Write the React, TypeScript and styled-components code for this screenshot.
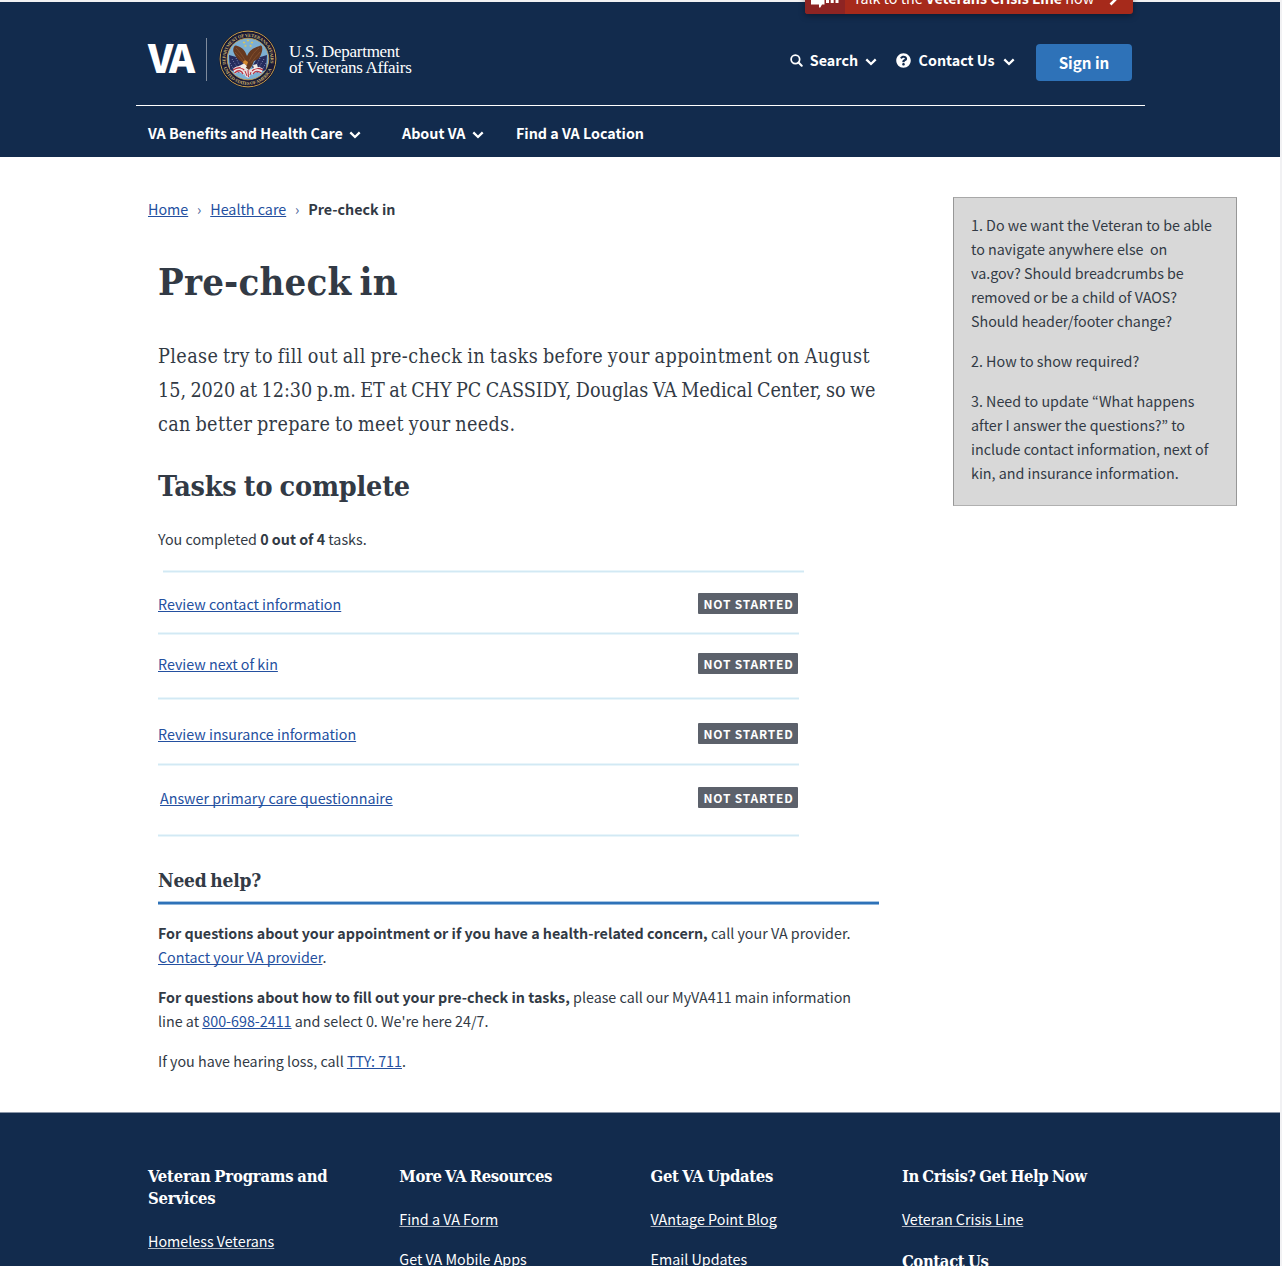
import React from "react";
import styled, { createGlobalStyle } from "styled-components";
import { FaQuestionCircle } from "react-icons/fa";

const sans = `"Noto Sans CJK KR", "Noto Sans", sans-serif`;
const slab = `"DejaVu Serif Condensed", "DejaVu Serif", serif`;
const navy = "#122b4d";
const ink = "#323a45";
const linkBlue = "#2450a0";

const GlobalStyle = createGlobalStyle`
  * { box-sizing: border-box; }
  body { margin: 0; background: #f2f2f3; }
  h1, h2, h3, p, ul { margin: 0; padding: 0; }
  ul { list-style: none; }
`;

const Frame = styled.div`
  width: 1282px;
  height: 1266px;
  overflow: hidden;
  padding: 2px 2px 0 0;
  background: #f1f1f3;
  font-family: ${sans};
  font-size: 14.31px;
  line-height: 24px;
  color: ${ink};
  position: relative;
`;

const Page = styled.div`
  background: #fff;
  height: 1264px;
  display: flex;
  flex-direction: column;
`;

/* ---------- header ---------- */

const Header = styled.header`
  height: 155px;
  flex: none;
  background: ${navy};
  color: #fff;
  padding-left: 136px;
`;

const HeaderTop = styled.div`
  width: 1009px;
  height: 104px;
  border-bottom: 1px solid #fff;
  padding: 0 13px 0 12px;
  display: flex;
  justify-content: space-between;
  align-items: flex-start;
`;

const Brand = styled.div`
  display: flex;
  padding-top: 28px;
`;

const Wordmark = styled.div`
  width: 58px;
  height: 60px;
  margin-top: -4px;
  font-weight: 900;
  font-size: 39.5px;
  line-height: 60px;
  letter-spacing: -3.5px;
`;

const BrandRule = styled.div`
  width: 1px;
  height: 43px;
  margin: 8px 12px 0 0;
  background: #7f8b9d;
`;

const BrandName = styled.div`
  margin: 14px 0 0 12px;
  font-family: "Liberation Serif", serif;
  font-size: 17px;
  line-height: 16px;
  letter-spacing: -0.28px;
  white-space: nowrap;
`;

const Tools = styled.div`
  display: flex;
  align-items: flex-start;
  padding-top: 42px;
`;

const Tool = styled.div<{ $after: number; $gap: number }>`
  display: flex;
  align-items: center;
  height: 34px;
  margin-top: -1px;
  gap: ${(p) => p.$gap}px;
  margin-right: ${(p) => p.$after}px;
  font-weight: 700;
  white-space: nowrap;
`;

const SignIn = styled.button`
  width: 96px;
  height: 37px;
  border: 0;
  border-radius: 4px;
  background: #2e72b8;
  color: #fff;
  font: 700 15.2px/37px ${sans};
  padding: 0;
`;

const Nav = styled.nav`
  display: flex;
  padding: 15px 0 0 12px;
  font-weight: 700;
`;

const NavItem = styled.div<{ $width: number }>`
  width: ${(p) => p.$width}px;
  display: flex;
  align-items: center;
  gap: 6.5px;
  white-space: nowrap;
`;

const CrisisBanner = styled.div`
  position: absolute;
  left: 804.5px;
  top: -26px;
  width: 328px;
  height: 40px;
  display: flex;
  border-radius: 0 0 3px 3px;
  overflow: hidden;
  background: #a62a1b;
  color: #fff;
  box-shadow: 0 2px 6px rgba(0, 0, 0, 0.35);
`;

const CrisisIcon = styled.div`
  width: 40px;
  background: #8d2423;
  padding: 14px 0 0 6px;
`;

const CrisisText = styled.div`
  flex: 1;
  display: flex;
  justify-content: space-between;
  padding: 12px 15px 0 8.5px;
  white-space: nowrap;
  line-height: 24px;
`;

const Drawing = styled.svg<{ $drop?: number }>`
  flex: none;
  margin-top: ${(p) => p.$drop ?? 0}px;
`;

/* ---------- body ---------- */

const Body = styled.div`
  height: 955px;
  flex: none;
  display: flex;
  align-items: flex-start;
  padding-left: 148px;
`;

const Main = styled.main`
  width: 805px;
  padding-top: 40px;
`;

const Crumbs = styled.nav`
  display: flex;
  height: 24px;
`;

const CrumbSep = styled.span`
  width: 22px;
  text-align: center;
  color: #4d6699;
`;

const Link = styled.a`
  color: ${linkBlue};
  text-decoration: underline;
  text-decoration-thickness: 1px;
  text-underline-offset: 1px;
  text-decoration-skip-ink: none;
`;

const Article = styled.div`
  padding-left: 10px;
`;

const Title = styled.h1`
  margin-top: 37px;
  font: 700 38px/48px ${slab};
  letter-spacing: 0.2px;
  word-spacing: -4px;
`;

const Intro = styled.p`
  margin-top: 34px;
  font: 400 19.6px/34px ${slab};
`;

const IntroLine = styled.span<{ $track: number }>`
  display: block;
  white-space: nowrap;
  letter-spacing: ${(p) => p.$track}px;
  word-spacing: -1.2px;
`;

const SectionTitle = styled.h2`
  margin-top: 26px;
  font: 700 28.5px/36px ${slab};
  letter-spacing: -0.2px;
  word-spacing: -1.5px;
`;

const Progress = styled.p`
  margin-top: 23px;
`;

const Tasks = styled.ul`
  margin-top: 19px;
  width: 640.5px;
`;

const Rule = styled.div<{ $shift?: number }>`
  height: 3px;
  margin-left: ${(p) => p.$shift ?? 0}px;
  margin-right: ${(p) => -(p.$shift ?? 0)}px;
  background: linear-gradient(#e9f5fa 1px, #d2e9f4 1px 2px, #e9f5fa 2px);
`;

const TaskRow = styled.li<{ $height: number; $top: number; $indent?: number }>`
  height: ${(p) => p.$height}px;
  padding: ${(p) => p.$top}px 0.5px 0 ${(p) => p.$indent ?? 0}px;
  display: flex;
  justify-content: space-between;
  align-items: flex-start;
  line-height: 22px;
`;

const Badge = styled.span`
  width: 100px;
  height: 21px;
  border-radius: 1px;
  background: #5c616b;
  color: #fff;
  font-size: 12px;
  font-weight: 700;
  line-height: 21px;
  letter-spacing: 0.8px;
  text-align: center;
  padding-left: 1px;
  white-space: nowrap;
`;

const HelpTitle = styled.h3`
  margin-top: 31px;
  height: 33px;
  font: 700 19px/24px ${slab};
  letter-spacing: -0.2px;
  word-spacing: -2px;
`;

const HelpRule = styled.div`
  width: 721px;
  height: 4px;
  background: linear-gradient(#a8c6e3 1px, #2e72b8 1px 3px, #8fb5da 3px);
`;

const HelpText = styled.p`
  margin-top: 16px;
  white-space: nowrap;
`;

const Note = styled.aside`
  width: 284px;
  height: 309px;
  margin-top: 40px;
  padding: 15px 10px 0 17px;
  background: #d8d8d8;
  border: 1px solid #979797;
  border-top-color: #a8a8a8;
  border-bottom-color: #b0b0b0;
`;

const NoteText = styled.p`
  margin-bottom: 16px;
  white-space: pre;
`;

/* ---------- footer ---------- */

const Footer = styled.footer`
  flex: 1;
  background: ${navy};
  border-top: 1px solid #8a96a8;
  color: #fff;
  display: flex;
  padding: 53px 0 0 148px;
`;

const FooterCol = styled.div`
  width: 251.3px;
`;

const FooterTitle = styled.h3<{ $track?: number; $top?: number }>`
  margin-top: ${(p) => p.$top ?? 0}px;
  font: 700 16.5px/22px ${slab};
  letter-spacing: ${(p) => p.$track ?? -0.35}px;
  word-spacing: -1.2px;
  white-space: nowrap;
`;

const FooterLinks = styled.ul`
  padding-top: 19.4px;
`;

const FooterItem = styled.li`
  margin-bottom: 16px;
`;

const FooterLink = styled(Link)`
  color: #fff;
  text-decoration-color: #b0b8c4;
`;

const Chevron = () => (
  <Drawing width="12" height="8" viewBox="0 0 12 8" $drop={4}>
    <path d="M1.3 1.4 6 6 10.7 1.4" fill="none" stroke="#fff" strokeWidth="2.3" />
  </Drawing>
);

const Magnifier = () => (
  <Drawing width="13" height="13" viewBox="0 0 14 14">
    <circle cx="5.8" cy="5.7" r="4.6" fill="none" stroke="#fff" strokeWidth="1.9" />
    <path d="M9.2 9.2 12.6 12.6" stroke="#fff" strokeWidth="2.2" strokeLinecap="round" />
  </Drawing>
);

const Star = ({ x, y }: { x: number; y: number }) => (
  <path
    transform={`translate(${x} ${y})`}
    d="M0-1.5.4-.5 1.5-.5.6.2 1 1.3 0 .6-1 1.3-.6.2-1.5-.5-.4-.5Z"
    fill="#e8c94a"
  />
);

const Seal = () => (
  <Drawing width="58" height="58" viewBox="-29 -29 58 58">
    <defs>
      <path id="arcTop" d="M-22 5.500A22.600 22.600 0 1 1 22 5.500" />
      <path id="arcBottom" d="M-24.400 8.500A25.800 25.800 0 0 0 24.400 8.500" />
      <clipPath id="sky">
        <circle r="20.6" />
      </clipPath>
    </defs>
    <circle r="28.8" fill="#14142e" />
    <circle r="27.9" fill="none" stroke="#c9a24d" strokeWidth="1" />
    <circle r="27" fill="#191a38" />
    <circle r="20.8" fill="#7db0d3" stroke="#c9a24d" strokeWidth=".8" />
    <g fill="#cbb26b" fontFamily="Liberation Serif, serif" fontWeight="700" fontSize="4.6">
      <text textLength="80" lengthAdjust="spacing">
        <textPath href="#arcTop">DEPARTMENT OF VETERANS AFFAIRS</textPath>
      </text>
      <text textLength="62" lengthAdjust="spacing">
        <textPath href="#arcBottom">UNITED STATES OF AMERICA</textPath>
      </text>
    </g>
    <g clipPath="url(#sky)">
      <path d="M-19-4-8-1-3 8-9 14-18 11Z" fill="#262c5e" />
      <path d="M19-4 9-1 4 8 9 14 18 11Z" fill="#262c5e" />
      <path
        d="M-16 0-11 8M-12-1-8 7M-18 4-14 11M16 0 11 8M12-1 8 7M18 4 14 11"
        stroke="#9fa7cc"
        strokeWidth=".8"
        strokeDasharray="1 1.6"
      />
      <path d="M-15 10C-10 5-4 7-1 11L-4 16C-8 12-11 13-13 15Z" fill="#eee4e4" />
      <path d="M15 10C11 6 5 9 2 11L4 16C8 12 11 13 13 15Z" fill="#eee4e4" />
      <path
        d="M-15 11C-9 7-5 9-3 12M-13.500 14C-9 10-6 12-5 15M15 11C10 8 6 10 4 12M13.500 14C9 11 7 12 5 15"
        fill="none"
        stroke="#b9313f"
        strokeWidth="1.300"
      />
      <path d="M-4 11 0 7 4 12 2 17 0 19-3 17Z" fill="#e6dcdc" />
      <path d="M-3 12-1 17M0 11 .5 18M3 13 2 16" stroke="#b9313f" strokeWidth="1" />
    </g>
    <path
      d="M-14.500-7C-15.500-11-13.500-14-12-13.500-6-12-3-9-1-3 1-8 5-11 11.500-13 14.500-15 15-10 13.500-6 12.500-2 10 1 6 2L4 7 1 11-3 8-6 3C-10 1-13-3-14.500-7Z"
      fill="#663920"
    />
    <path
      d="M-12-11C-9-8-6-4-3 1M-13-7C-10-4-7-1-4 3M11-11C7-8 4-4 1 2M12-7C9-3 6-1 3 4"
      fill="none"
      stroke="#8d5832"
      strokeWidth=".7"
    />
    <path d="M-5 3-3 1 0 3-1 6-4 5.500Z" fill="#d5892f" />
    <path d="M-8 6.500-4 4.500-1 7-3 10-7 9Z" fill="#f1ece6" />
    <path d="M5 6 9 5 10 9 6 10Z" fill="#f1ece6" />
    <Star x={0} y={-18.500} />
    <Star x={-4} y={-16.500} />
    <Star x={4} y={-16.500} />
    <Star x={-2.600} y={-13} />
    <Star x={2.600} y={-13} />
  </Drawing>
);

const CrisisGlyph = () => (
  <Drawing width="30" height="22" viewBox="0 0 30 22">
    <path d="M0 0H13.500V16.500H11L9.300 19.500 8 19.500V16.500H0Z" fill="#fff" />
    <path d="M13 0H28.500V12H13Z" fill="#fff" />
    <path d="M16.500 11V15M21.200 11V15M26 11V15" stroke="#fff" strokeWidth="3" />
  </Drawing>
);

const tasks = [
  { name: "Review contact information", height: 59, top: 20 },
  { name: "Review next of kin", height: 62, top: 18 },
  { name: "Review insurance information", height: 63, top: 23 },
  { name: "Answer primary care questionnaire", height: 68, top: 21, indent: 2 },
];

const notes = [
  "1. Do we want the Veteran to be able\nto navigate anywhere else  on\nva.gov? Should breadcrumbs be\nremoved or be a child of VAOS?\nShould header/footer change?",
  "2. How to show required?",
  "3. Need to update “What happens\nafter I answer the questions?” to\ninclude contact information, next of\nkin, and insurance information.",
];

const footerCols = [
  { title: ["Veteran Programs and", "Services"], links: ["Homeless Veterans"], track: -0.2 },
  { title: ["More VA Resources"], links: ["Find a VA Form", "Get VA Mobile Apps"], track: -0.35 },
  { title: ["Get VA Updates"], links: ["VAntage Point Blog", "Email Updates"], track: -0.3 },
  {
    title: ["In Crisis? Get Help Now"],
    links: ["Veteran Crisis Line"],
    next: "Contact Us",
    track: -0.43,
  },
];

export default function App() {
  return (
    <Frame>
      <GlobalStyle />
      <Page>
        <Header>
          <HeaderTop>
            <Brand>
              <Wordmark>VA</Wordmark>
              <BrandRule />
              <Seal />
              <BrandName>
                U.S. Department
                <br />
                of Veterans Affairs
              </BrandName>
            </Brand>
            <Tools>
              <Tool $gap={7} $after={18.5}>
                <Magnifier />
                Search
                <Chevron />
              </Tool>
              <Tool $gap={8} $after={21.5}>
                <FaQuestionCircle size={15} />
                Contact Us
                <Chevron />
              </Tool>
              <SignIn>Sign in</SignIn>
            </Tools>
          </HeaderTop>
          <Nav>
            <NavItem $width={254}>
              VA Benefits and Health Care <Chevron />
            </NavItem>
            <NavItem $width={114}>
              About VA <Chevron />
            </NavItem>
            <NavItem $width={130}>Find a VA Location</NavItem>
          </Nav>
        </Header>

        <Body>
          <Main>
            <Crumbs>
              <Link>Home</Link>
              <CrumbSep>›</CrumbSep>
              <Link>Health care</Link>
              <CrumbSep>›</CrumbSep>
              <b>Pre-check in</b>
            </Crumbs>
            <Article>
              <Title>Pre-check in</Title>
              <Intro>
                <IntroLine $track={0.4}>
                  Please try to fill out all pre-check in tasks before your appointment on August
                </IntroLine>
                <IntroLine $track={-0.01}>
                  15, 2020 at 12:30 p.m. ET at CHY PC CASSIDY, Douglas VA Medical Center, so we
                </IntroLine>
                <IntroLine $track={0.34}>can better prepare to meet your needs.</IntroLine>
              </Intro>
              <SectionTitle>Tasks to complete</SectionTitle>
              <Progress>
                You completed <b>0 out of 4</b> tasks.
              </Progress>
              <Tasks>
                <Rule $shift={5.4} />
                {tasks.map((t) => (
                  <React.Fragment key={t.name}>
                    <TaskRow $height={t.height} $top={t.top} $indent={t.indent}>
                      <Link>{t.name}</Link>
                      <Badge>NOT STARTED</Badge>
                    </TaskRow>
                    <Rule />
                  </React.Fragment>
                ))}
              </Tasks>
              <HelpTitle>Need help?</HelpTitle>
              <HelpRule />
              <HelpText>
                <b>For questions about your appointment or if you have a health-related concern,</b>{" "}
                call your VA provider.
                <br />
                <Link>Contact your VA provider</Link>.
              </HelpText>
              <HelpText>
                <b>For questions about how to fill out your pre-check in tasks,</b> please call our
                MyVA411 main information
                <br />
                line at <Link>800-698-2411</Link> and select 0. We're here 24/7.
              </HelpText>
              <HelpText>
                If you have hearing loss, call <Link>TTY: 711</Link>.
              </HelpText>
            </Article>
          </Main>
          <Note>
            {notes.map((n) => (
              <NoteText key={n}>{n}</NoteText>
            ))}
          </Note>
        </Body>

        <Footer>
          {footerCols.map((c) => (
            <FooterCol key={c.title[0]}>
              {c.title.map((line) => (
                <FooterTitle key={line} $track={c.track}>
                  {line}
                </FooterTitle>
              ))}
              <FooterLinks>
                {c.links.map((l) => (
                  <FooterItem key={l}>
                    <FooterLink>{l}</FooterLink>
                  </FooterItem>
                ))}
              </FooterLinks>
              {c.next && <FooterTitle $top={20}>{c.next}</FooterTitle>}
            </FooterCol>
          ))}
        </Footer>
      </Page>
      <CrisisBanner>
        <CrisisIcon>
          <CrisisGlyph />
        </CrisisIcon>
        <CrisisText>
          <span>
            Talk to the <b>Veterans Crisis Line</b> now
          </span>
          <Drawing width="9" height="14" viewBox="0 0 9 14" $drop={6}>
            <path d="M1.500 1.500 7 7 1.500 12.500" fill="none" stroke="#fff" strokeWidth="2.600" />
          </Drawing>
        </CrisisText>
      </CrisisBanner>
    </Frame>
  );
}
